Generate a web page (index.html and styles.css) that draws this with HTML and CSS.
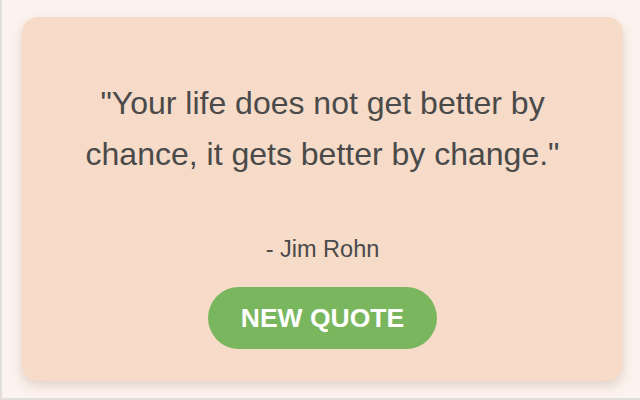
FILE: index.html
```html
<!DOCTYPE html>
<html>
<head>
<meta charset="utf-8">
<link rel="stylesheet" href="styles.css">
</head>
<body>
<div class="frame">
  <div class="card">
    <p class="quote">"Your life does not get better by chance, it gets better by change."</p>
    <p class="author">- Jim Rohn</p>
    <button class="btn">NEW QUOTE</button>
  </div>
</div>
</body>
</html>
```

FILE: styles.css
```css
html, body {
  margin: 0;
  padding: 0;
  height: 100%;
}
body {
  background: #fdf3ee;
  font-family: "Liberation Sans", Arial, sans-serif;
}
.frame {
  box-sizing: border-box;
  height: 400px;
  border-left: 2px solid #e2dedc;
  border-bottom: 2px solid #e2dedc;
  padding: 17px 17px 0 20px;
}
.card {
  box-sizing: border-box;
  width: 601px;
  height: 364px;
  background: #f6dbc8;
  border-radius: 16px;
  box-shadow: 0 5px 12px rgba(120, 90, 70, 0.22);
  display: flex;
  flex-direction: column;
  align-items: center;
  padding: 61px 30px 0;
}
.quote {
  margin: 0;
  font-size: 32px;
  line-height: 51.2px;
  color: #4a4a4a;
  text-align: center;
  max-width: 480px;
}
.author {
  margin: 56px 0 0;
  font-size: 23.5px;
  line-height: 26px;
  color: #4a4a4a;
}
.btn {
  margin-top: 25px;
  height: 62px;
  width: 229px;
  border: none;
  border-radius: 31px;
  background: #79b65e;
  color: #ffffff;
  font-family: "Liberation Sans", Arial, sans-serif;
  font-weight: bold;
  font-size: 26.5px;
  padding: 0;
}
```
